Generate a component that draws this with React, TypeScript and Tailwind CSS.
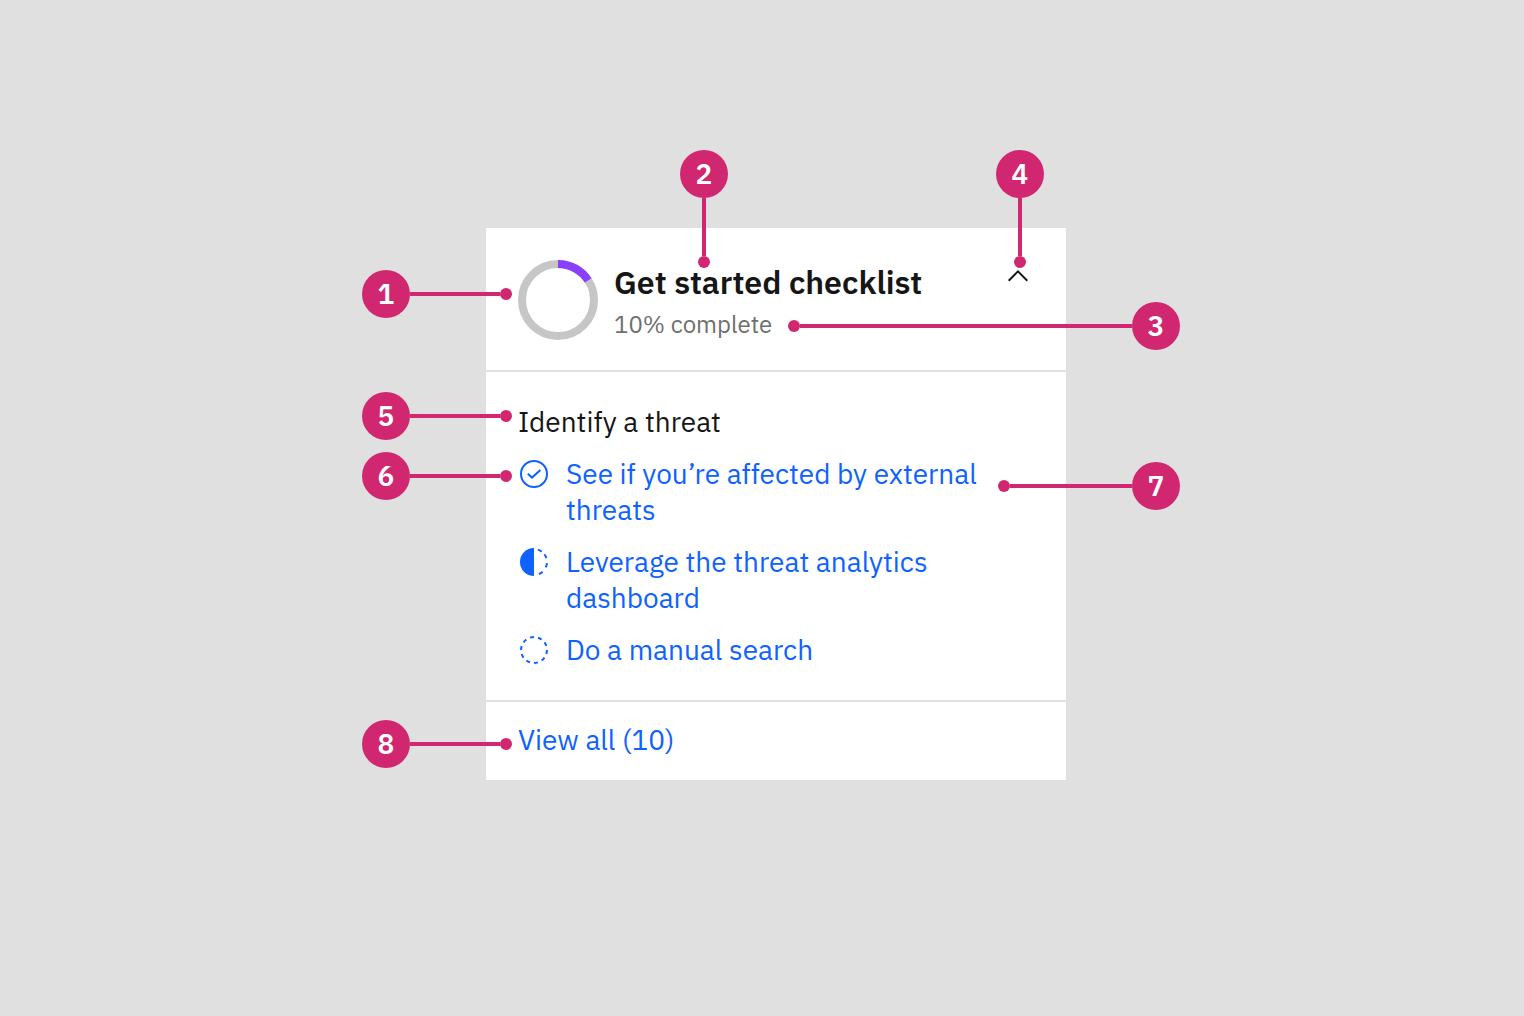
import { useState } from "react";

type Side = "left" | "right" | "top";

const callouts: { n: number; side: Side; place: string }[] = [
  { n: 1, side: "left", place: "top-[42px] -left-[124px] w-[150px]" },
  { n: 2, side: "top", place: "-top-[78px] left-[194px] h-[118px]" },
  { n: 3, side: "right", place: "top-[74px] -right-[114px] w-[392px]" },
  { n: 4, side: "top", place: "-top-[78px] right-[22px] h-[118px]" },
  { n: 5, side: "left", place: "top-[164px] -left-[124px] w-[150px]" },
  { n: 6, side: "left", place: "top-[224px] -left-[124px] w-[150px]" },
  { n: 7, side: "right", place: "top-[234px] -right-[114px] w-[182px]" },
  { n: 8, side: "left", place: "top-[492px] -left-[124px] w-[150px]" },
];

const direction: Record<Side, string> = {
  left: "flex-row",
  right: "flex-row-reverse",
  top: "flex-col",
};

function Callout({ n, side, place }: { n: number; side: Side; place: string }) {
  return (
    <div className={`pointer-events-none absolute flex items-center ${direction[side]} ${place}`}>
      <span className="flex size-12 shrink-0 items-center justify-center rounded-full bg-[#d12771] text-[28px] leading-9 font-semibold text-white">
        {n}
      </span>
      <span className={`flex-1 bg-[#d12771] ${side === "top" ? "w-1" : "h-1"}`} />
      <span className="size-3 shrink-0 rounded-full bg-[#d12771]" />
    </div>
  );
}

function ProgressRing() {
  return (
    <svg viewBox="0 0 80 80" className="size-20 shrink-0" fill="none" strokeWidth="8" role="img" aria-label="Progress">
      <circle cx="40" cy="40" r="36" stroke="#c6c6c6" />
      <path d="M40 4A36 36 0 0 1 70.2 20.4" stroke="#8a3ffc" />
    </svg>
  );
}

function DoneIcon() {
  return (
    <svg viewBox="0 0 32 32" className="mt-0.5 size-8 shrink-0" fill="none" stroke="currentColor" strokeWidth="2" aria-hidden="true">
      <circle cx="16" cy="16" r="13" />
      <path d="M9.8 15.8l4.2 3.8 8.4-7.6" />
    </svg>
  );
}

function HalfIcon() {
  return (
    <svg viewBox="0 0 32 32" className="mt-0.5 size-8 shrink-0" aria-hidden="true">
      <path d="M16 2a14 14 0 0 0 0 28z" fill="currentColor" />
      <g stroke="currentColor" strokeWidth="2">
        {[-63, -27, 15, 58].map((a) => (
          <path key={a} d="M28.8 13.8a13 13 0 0 1 0 4.4" fill="none" transform={`rotate(${a} 16 16)`} />
        ))}
      </g>
    </svg>
  );
}

function DashedIcon() {
  return (
    <svg viewBox="0 0 32 32" className="mt-0.5 size-8 shrink-0" aria-hidden="true">
      <g stroke="currentColor" strokeWidth="2">
        {[9, 45, 81, 117, 153, 189, 225, 261, 297, 333].map((a) => (
          <path key={a} d="M28.8 14a13 13 0 0 1 0 4" fill="none" transform={`rotate(${a} 16 16)`} />
        ))}
      </g>
    </svg>
  );
}

const tasks = [
  { label: "See if you’re affected by external threats", Icon: DoneIcon },
  { label: "Leverage the threat analytics dashboard", Icon: HalfIcon },
  { label: "Do a manual search", Icon: DashedIcon },
];

export default function App() {
  const [open, setOpen] = useState(true);

  return (
    <main className="flex min-h-screen items-center justify-center bg-[#e0e0e0] pb-2 pl-7 font-['IBM_Plex_Sans','Noto_Sans',sans-serif] text-[#161616]">
      <div className="relative w-full max-w-[580px]">
        <section className="bg-white text-[28px] leading-9">
          <header className="flex items-start gap-4 border-b-2 border-[#e0e0e0] px-8 pt-8 pb-[30px]">
            <ProgressRing />
            <div className="flex-1">
              <h1 className="text-[32px] leading-[44px] font-semibold">Get started checklist</h1>
              <p className="mt-1 text-2xl leading-8 text-[#6f6f6f]">10% complete</p>
            </div>
            <button type="button" aria-label="Toggle checklist" aria-expanded={open} onClick={() => setOpen(!open)}>
              <svg viewBox="0 0 32 32" className="size-8" fill="none" stroke="currentColor" strokeWidth="2">
                <path d={open ? "M6.7 20.7 16 11.4l9.3 9.3" : "M6.7 11.4 16 20.7l9.3-9.3"} />
              </svg>
            </button>
          </header>
          {open && (
            <div className="border-b-2 border-[#e0e0e0] p-8">
              <h2>Identify a threat</h2>
              <ul className="mt-4 flex flex-col gap-4 text-[#0f62fe]">
                {tasks.map(({ label, Icon }) => (
                  <li key={label}>
                    <a href="#" className="flex gap-4">
                      <Icon />
                      <span>{label}</span>
                    </a>
                  </li>
                ))}
              </ul>
            </div>
          )}
          <footer className="px-8 pt-5 pb-[22px]">
            <a href="#" className="block text-[#0f62fe]">View all (10)</a>
          </footer>
        </section>
        {callouts.map((c) => (
          <Callout key={c.n} {...c} />
        ))}
      </div>
    </main>
  );
}
